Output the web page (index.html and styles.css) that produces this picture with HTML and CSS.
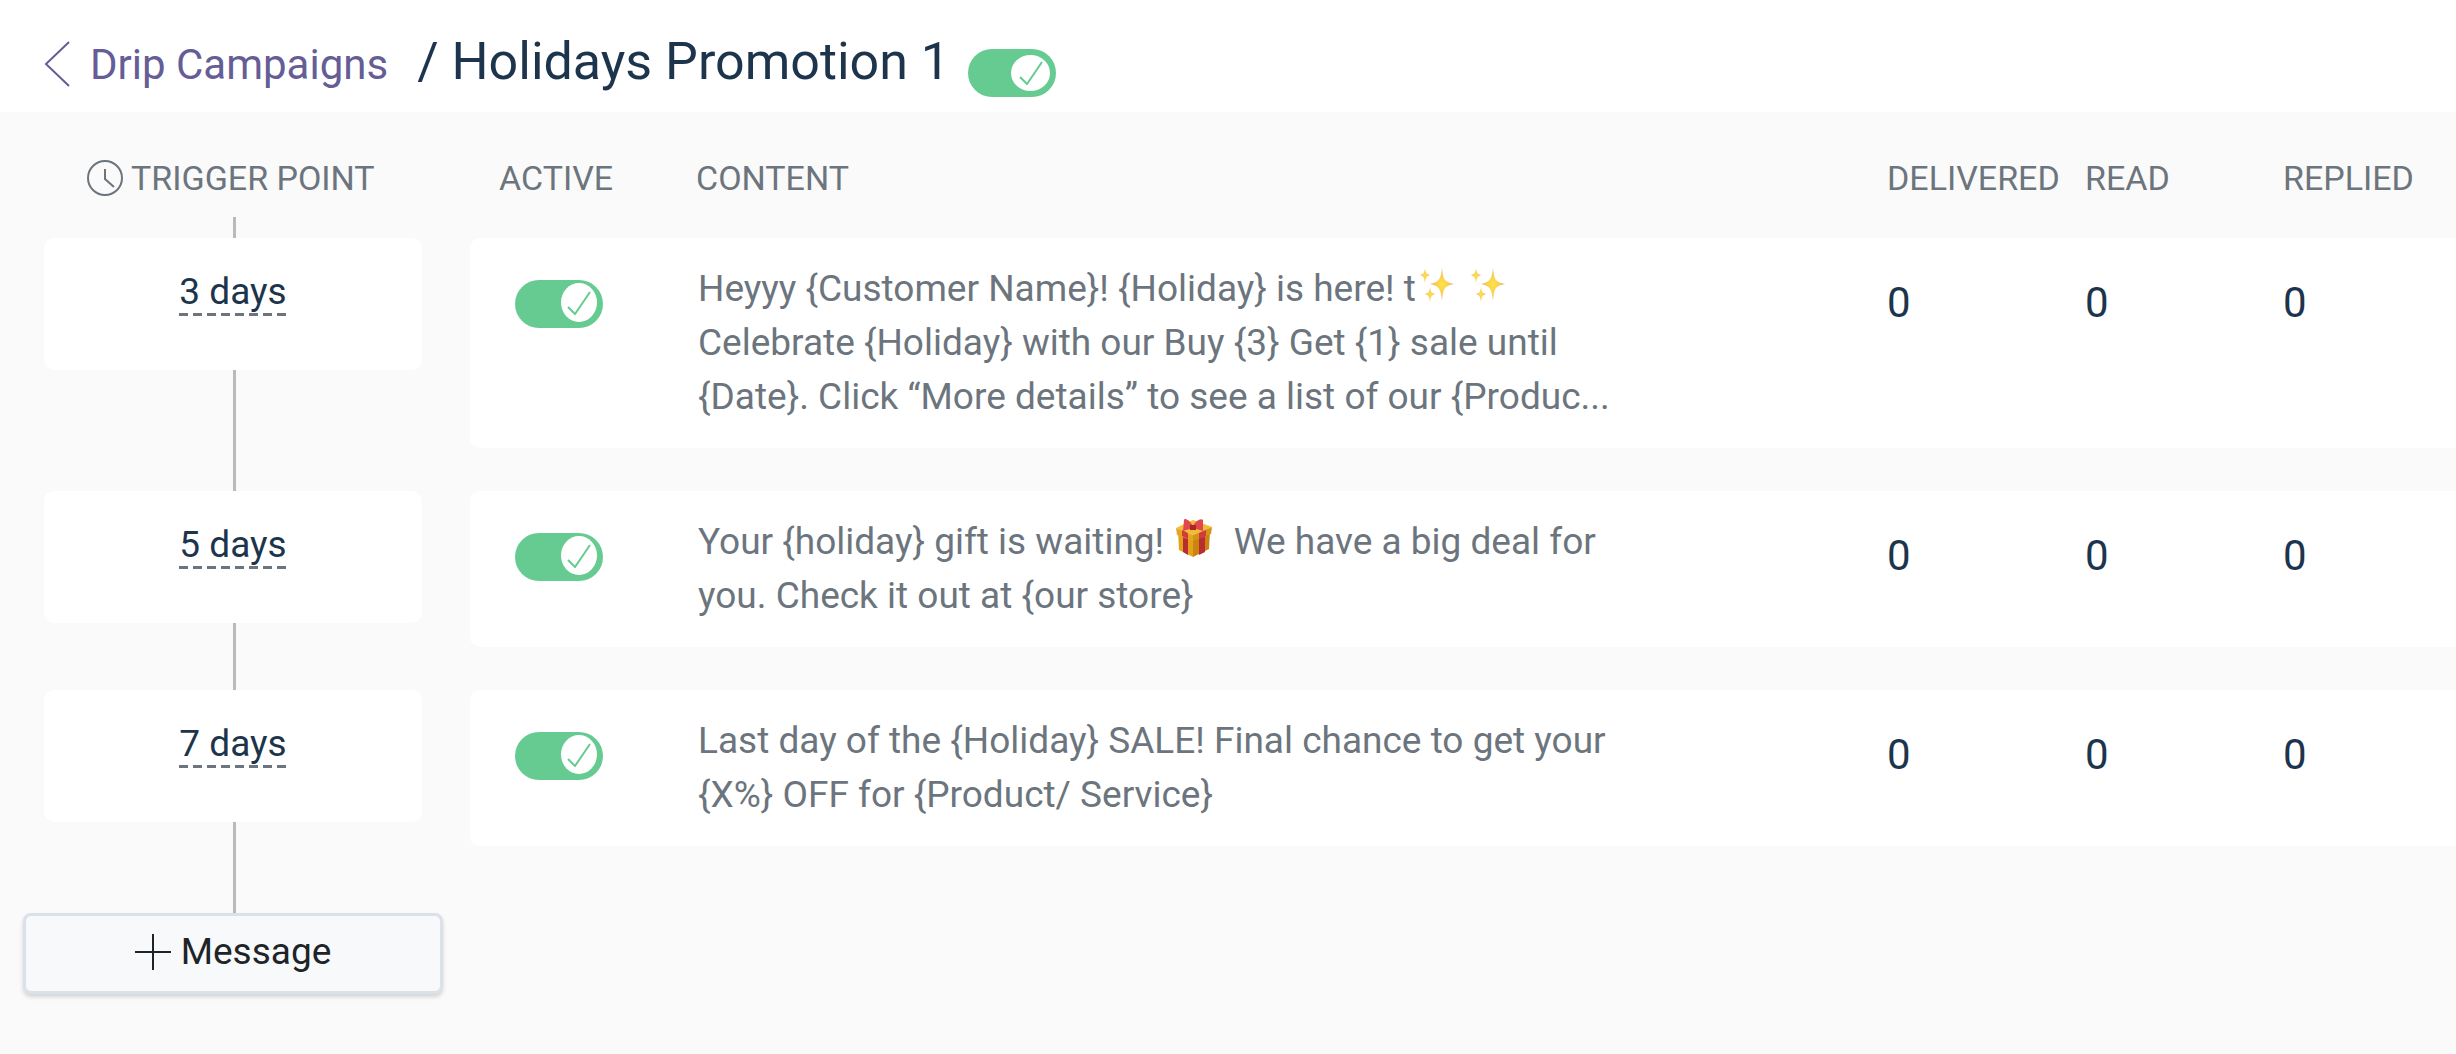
FILE: index.html
```html
<!DOCTYPE html>
<html lang="en">
<head>
    <meta charset="UTF-8">
    <meta name="viewport" content="width=device-width, initial-scale=1.0">
    <title>Holidays Promotion 1</title>
    <link rel="stylesheet" href="styles.css">
</head>
<body>
    <!-- Shapes used more than once -->
    <svg class="sprite" aria-hidden="true">
        <defs>
            <radialGradient id="gold">
                <stop offset="0" stop-color="#fde24a"/>
                <stop offset="0.5" stop-color="#fbcf4d"/>
                <stop offset="1" stop-color="#eda35c"/>
            </radialGradient>
        </defs>
        <symbol id="check" viewBox="0 0 24 24">
            <path d="M1 16l7 7L23 1" fill="none" stroke="currentColor" stroke-width="2"/>
        </symbol>
        <symbol id="sparkles" viewBox="0 0 36 36">
            <path fill="url(#gold)" d="M23 1C24 12 25 15 35 17C25 19 24 22 23 34C22 22 20 19 11 17C20 15 22 12 23 1Z"/>
            <path fill="url(#gold)" d="M6 1C6.500 6 7.500 7 11 8C7.500 9 6.500 11 6 16C5.500 11 4.500 9 1 8C4.500 7 5.500 6 6 1Z"/>
            <path fill="url(#gold)" d="M11 20C11.500 25 12.500 26 16 27C12.500 28 11.500 30 11 35C10.500 30 9.500 28 6 27C9.500 26 10.500 25 11 20Z"/>
        </symbol>
    </svg>

    <div class="header">
        <a href="#" class="back"><svg class="back-icon" viewBox="0 0 26 46" aria-hidden="true"><path d="M25 1L2 23l23 22" fill="none" stroke="currentColor" stroke-width="2"/></svg>Drip Campaigns</a>
        <h1 class="title">/ Holidays Promotion 1</h1>
        <label class="switch">
            <input type="checkbox" aria-label="Campaign active" checked>
            <span class="knob"><svg class="check"><use href="#check"/></svg></span>
        </label>
    </div>

    <table class="campaign">
        <thead>
            <tr>
                <th class="trigger-head">
                    <svg class="clock" viewBox="0 0 36 36" aria-hidden="true"><g fill="none" stroke="currentColor" stroke-width="2"><circle cx="18" cy="18" r="17"/><path d="M18 9v10l9 8"/></g></svg>
                    TRIGGER POINT
                </th>
                <th class="active-head">ACTIVE</th>
                <th>CONTENT</th>
                <th>DELIVERED</th>
                <th>READ</th>
                <th>REPLIED</th>
            </tr>
        </thead>
        <tbody>
            <tr>
                <td class="trigger"><div class="day-card"><button type="button" class="day">3 days</button></div></td>
                <td class="active">
                    <label class="switch">
                        <input type="checkbox" aria-label="3 days message active" checked>
                        <span class="knob"><svg class="check"><use href="#check"/></svg></span>
                    </label>
                </td>
                <td class="content">Heyyy {Customer Name}! {Holiday} is here! t<svg class="emoji" role="img" aria-label="sparkles"><use href="#sparkles"/></svg> <svg class="emoji" role="img" aria-label="sparkles"><use href="#sparkles"/></svg><br>Celebrate {Holiday} with our Buy {3} Get {1} sale until<br>{Date}. Click “More details” to see a list of our {Produc...</td>
                <td class="count">0</td>
                <td class="count">0</td>
                <td class="count">0</td>
            </tr>
            <tr>
                <td class="trigger"><div class="day-card"><button type="button" class="day">5 days</button></div></td>
                <td class="active">
                    <label class="switch">
                        <input type="checkbox" aria-label="5 days message active" checked>
                        <span class="knob"><svg class="check"><use href="#check"/></svg></span>
                    </label>
                </td>
                <td class="content">Your {holiday} gift is waiting! <svg class="emoji gift" viewBox="0 0 36 40" role="img" aria-label="gift">
                    <path fill="#e3a21a" d="M2 13L17 20V39L3 32Z"/>
                    <path fill="#c98510" d="M17 20L34 13L33 31L17 39Z"/>
                    <path fill="#b92c30" d="M7 15l5 3v19l-5-3zM23 17l6-3v20l-6 3z"/>
                    <path fill="#f2bd35" d="M0 10L17 2L36 9L17 17Z"/>
                    <path fill="#e6a51e" d="M0 10L17 17V23L1 17Z"/>
                    <path fill="#d39417" d="M17 17L36 9L35 16L17 23Z"/>
                    <path fill="#d13b3f" d="M6 12l6 3v6l-6-3zM23 15l7-3v6l-7 3z"/>
                    <path fill="#e0484c" d="M17 8C13 1 8 0 8 2L7 13L17 10L27 13L27 2C25 0 20 2 17 8Z"/>
                    <path fill="#a8262c" d="M14 7h6v5h-6z"/>
                </svg>&nbsp; We have a big deal for<br>you. Check it out at {our store}</td>
                <td class="count">0</td>
                <td class="count">0</td>
                <td class="count">0</td>
            </tr>
            <tr>
                <td class="trigger"><div class="day-card"><button type="button" class="day">7 days</button></div></td>
                <td class="active">
                    <label class="switch">
                        <input type="checkbox" aria-label="7 days message active" checked>
                        <span class="knob"><svg class="check"><use href="#check"/></svg></span>
                    </label>
                </td>
                <td class="content">Last day of the {Holiday} SALE! Final chance to get your<br>{X%} OFF for {Product/ Service}</td>
                <td class="count">0</td>
                <td class="count">0</td>
                <td class="count">0</td>
            </tr>
        </tbody>
    </table>

    <button type="button" class="add-message">
        <svg class="plus" viewBox="0 0 36 36" aria-hidden="true"><path d="M18 0v36M0 18h36" stroke="currentColor" stroke-width="2"/></svg>
        Message
    </button>
</body>
</html>
```
FILE: styles.css
```css
* {
    box-sizing: border-box;
}

body {
    margin: 0;
    background-color: #fafafa;
    color: #6c757d;
    font-family: Roboto, "Liberation Sans", sans-serif;
    font-size: 37px;
}

button {
    font-family: inherit;
    font-size: inherit;
    cursor: pointer;
}

.sprite {
    position: absolute;
    width: 0;
    height: 0;
}

/* Header */
.header {
    display: flex;
    align-items: baseline;
    height: 112px;
    padding: 32px 44px 0;
    background-color: white;
}

.back {
    margin-right: 29px;
    color: #655d96;
    font-size: 42px;
    line-height: 50px;
    text-decoration: none;
}

.back-icon {
    width: 26px;
    height: 46px;
    margin-right: 20px;
    vertical-align: -8px;
}

.title {
    margin: 0 18px 0 0;
    color: #1c344c;
    font-size: 52px;
    font-weight: 400;
    line-height: 60px;
}

/* Switch */
.switch {
    position: relative;
    display: block;
    width: 88px;
    height: 48px;
    cursor: pointer;
}

.switch input {
    appearance: none;
    display: block;
    width: 88px;
    height: 48px;
    margin: 0;
    border-radius: 24px;
    background-color: #d0d4d8;
}

.switch input:checked {
    background-color: #66cb91;
}

.knob {
    position: absolute;
    top: 3px;
    right: 6px;
    display: flex;
    align-items: center;
    justify-content: center;
    width: 36px;
    height: 39px;
    border-radius: 50%;
    background-color: white;
    color: #66cb91;
    pointer-events: none;
}

.check {
    width: 24px;
    height: 24px;
}

.header .switch {
    align-self: flex-start;
    margin-top: 17px;
}

.header .knob {
    top: 6px;
    width: 39px;
    height: 36px;
}

/* Campaign table */
.campaign {
    display: block;
}

.campaign thead,
.campaign tbody {
    display: block;
}

.campaign tr {
    display: grid;
    grid-template-columns: 470px 226px minmax(0, 1fr) 198px 198px 173px;
}

.campaign th,
.campaign td {
    padding: 0;
    text-align: left;
}

.campaign thead tr {
    height: 126px;
    padding-top: 46px;
}

.campaign th {
    font-size: 34px;
    font-weight: 400;
    line-height: 40px;
}

.campaign .trigger-head {
    display: flex;
    gap: 8px;
    height: 40px;
    padding-left: 87px;
}

.clock {
    width: 36px;
    height: 36px;
    margin-top: 2px;
}

.campaign .active-head {
    padding-left: 29px;
}

.campaign tbody tr {
    margin-bottom: 43px;
}

.campaign tbody td {
    background-color: white;
}

.campaign tbody .trigger {
    position: relative;
    padding: 0 48px 0 44px;
    background: none;
}

/* line that joins the cards */
.trigger::before {
    content: "";
    position: absolute;
    top: -21px;
    bottom: -43px;
    left: 233px;
    width: 3px;
    background-color: #bababa;
}

tr:last-child .trigger::before {
    bottom: -67px;
}

.day-card {
    position: relative;
    height: 132px;
    padding-top: 31px;
    border-radius: 10px;
    background-color: white;
    text-align: center;
}

.day {
    padding: 0 0 1px;
    border: none;
    background: repeating-linear-gradient(to right, #6c757d 0 9px, transparent 9px 14px) bottom / 100% 3px no-repeat;
    color: #1c344c;
    line-height: 46px;
}

.campaign tbody .active {
    padding: 42px 0 0 45px;
    border-radius: 10px 0 0 10px;
}

.campaign tbody .content {
    padding: 24px 0 24px 2px;
    line-height: 54px;
}

.emoji {
    width: 36px;
    height: 36px;
    margin: 0 3px;
    vertical-align: -2px;
}

.gift {
    height: 40px;
    vertical-align: -4px;
}

.campaign tbody .count {
    padding-top: 39px;
    color: #1c344c;
    font-size: 42px;
    line-height: 52px;
}

/* Add button */
.add-message {
    position: relative;
    display: flex;
    align-items: center;
    justify-content: center;
    gap: 10px;
    width: 420px;
    height: 81px;
    margin: 67px 0 8px 23px;
    padding: 0 0 4px;
    border: 3px solid #dbe1e9;
    border-radius: 8px;
    background-color: #f8f9fb;
    box-shadow: 0 3px 4px rgba(0, 0, 0, 0.15);
    color: #1e2427;
}

.plus {
    width: 36px;
    height: 36px;
}
```
